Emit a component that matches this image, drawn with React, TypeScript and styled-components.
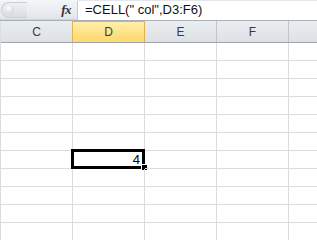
import styled, { createGlobalStyle } from "styled-components";

const GlobalStyle = createGlobalStyle`
  html, body {
    margin: 0;
    padding: 0;
    background: #ffffff;
    overflow: hidden;
  }
`;

const Window = styled.div`
  width: 317px;
  height: 240px;
  overflow: hidden;
  font-family: "Liberation Sans", Arial, sans-serif;
  background: #ffffff;
`;

const FormulaBar = styled.div`
  display: flex;
  height: 21px;
  box-sizing: border-box;
  background: #e3e7ec;
  border-bottom: 1px solid #a9b0b8;
`;

const ToolArea = styled.div`
  width: 77px;
  display: flex;
  align-items: center;
  justify-content: space-between;
  padding: 0 6px 0 1px;
  box-sizing: border-box;
  background: linear-gradient(to bottom, #f4f6f8, #e2e6eb);
  border-bottom: 1px solid #cfd4da;
`;

const Grip = styled.div`
  width: 26px;
  height: 16px;
  border-radius: 8px 0 0 8px;
  background: linear-gradient(to bottom, #eef0f3, #d8dde3);
  border: 1px solid #c9ced5;
  border-right: none;
  display: flex;
  align-items: center;
  padding-left: 3px;
  box-sizing: border-box;
`;

const GripDot = styled.div`
  width: 9px;
  height: 9px;
  border-radius: 50%;
  background: radial-gradient(circle at 40% 35%, #ffffff, #c4c9d0);
`;

const Fx = styled.span`
  font-family: "Liberation Serif", "Times New Roman", serif;
  font-style: italic;
  font-weight: bold;
  font-size: 13px;
  color: #333333;
  letter-spacing: -0.5px;
`;

const FormulaInput = styled.div`
  flex: 1;
  height: 19px;
  margin-top: 1px;
  background: #ffffff;
  border-left: 1px solid #c7ccd3;
  box-sizing: border-box;
  padding-left: 7px;
  font-size: 13px;
  line-height: 18px;
  color: #111111;
  white-space: nowrap;
`;

const Sheet = styled.div`
  display: flex;
  flex-direction: column;
  border-left: 1px solid #dadcdd;
`;

const HeaderRow = styled.div`
  display: flex;
  height: 22px;
  box-sizing: border-box;
  border-bottom: 1px solid #9ea5ad;
  background: linear-gradient(to bottom, #eaedf0, #dde1e6);
`;

const HeaderCell = styled.div<{ $active?: boolean }>`
  flex: 0 0 72px;
  box-sizing: border-box;
  display: flex;
  align-items: center;
  justify-content: center;
  font-size: 12px;
  color: #3a3a3a;
  border-right: 1px solid ${(p) => (p.$active ? "#e2b34c" : "#c0c5cc")};
  background: ${(p) =>
    p.$active ? "linear-gradient(to bottom, #ffeeaa, #fed86a)" : "transparent"};
  ${(p) => p.$active && "border-top: 1px solid #e2b34c; border-left: 1px solid #e2b34c; margin-left: -1px; flex-basis: 73px;"}
`;

const Row = styled.div`
  display: flex;
  height: 18px;
`;

const Cell = styled.div`
  position: relative;
  flex: 0 0 72px;
  box-sizing: border-box;
  border-right: 1px solid #dadcdd;
  border-bottom: 1px solid #dadcdd;
  font-size: 13px;
  line-height: 17px;
  text-align: right;
  padding-right: 4px;
  color: #000000;
`;

const Selection = styled.div`
  position: absolute;
  left: -2px;
  top: -2px;
  right: -1px;
  bottom: -1px;
  border: 3px solid #000000;
  box-sizing: border-box;
  pointer-events: none;
`;

const FillHandle = styled.div`
  position: absolute;
  right: -4px;
  bottom: -3px;
  width: 5px;
  height: 5px;
  background: #000000;
  border: 1px solid #ffffff;
`;

const columns = ["C", "D", "E", "F", ""];
const ROWS = 11;
const SELECTED_ROW = 6;
const SELECTED_COL = 1;

const App = () => {
  return (
    <Window>
      <GlobalStyle />
      <FormulaBar>
        <ToolArea>
          <Grip>
            <GripDot />
          </Grip>
          <Fx>fx</Fx>
        </ToolArea>
        <FormulaInput>=CELL(" col",D3:F6)</FormulaInput>
      </FormulaBar>
      <Sheet>
        <HeaderRow>
          {columns.map((c, i) => (
            <HeaderCell key={i} $active={i === SELECTED_COL}>
              {c}
            </HeaderCell>
          ))}
        </HeaderRow>
        {Array.from({ length: ROWS }).map((_, r) => (
          <Row key={r}>
            {columns.map((_, c) => {
              const selected = r === SELECTED_ROW && c === SELECTED_COL;
              return (
                <Cell key={c}>
                  {selected && (
                    <>
                      4
                      <Selection />
                      <FillHandle />
                    </>
                  )}
                </Cell>
              );
            })}
          </Row>
        ))}
      </Sheet>
    </Window>
  );
};

export default App;
